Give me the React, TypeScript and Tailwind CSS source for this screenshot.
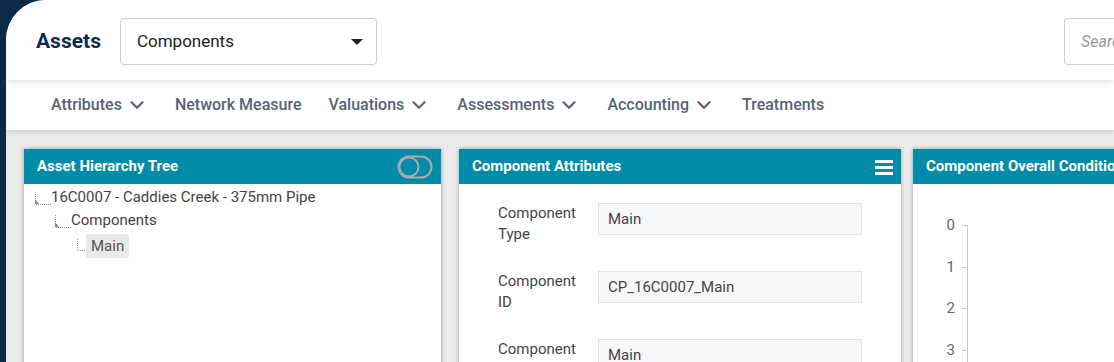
import { ChevronDown } from "lucide-react";

const font = { fontFamily: "Roboto, 'Liberation Sans', sans-serif" };

function TreeConnector() {
    return (
        <svg width="18" height="16" viewBox="0 0 18 16" className="shrink-0">
            <line x1="2.5" y1="0" x2="2.5" y2="12" stroke="#999" strokeWidth="1" strokeDasharray="1 1" />
            <polygon points="2,7 6,12 2,12" fill="#888" />
            <line x1="3" y1="12.5" x2="18" y2="12.5" stroke="#999" strokeWidth="1" strokeDasharray="1 1" />
        </svg>
    );
}

function LeafConnector() {
    return (
        <svg width="10" height="14" viewBox="0 0 10 14" className="shrink-0">
            <line x1="1.5" y1="0" x2="1.5" y2="11" stroke="#999" strokeWidth="1" strokeDasharray="1 1" />
            <line x1="2" y1="11.5" x2="10" y2="11.5" stroke="#999" strokeWidth="1" strokeDasharray="1 1" />
        </svg>
    );
}

function CardHeader({ title, children }: { title: string; children?: React.ReactNode }) {
    return (
        <div className="flex h-[35px] items-center justify-between bg-[#008ba8] pl-[13px] pr-[8px]">
            <h2 className="text-[15px] font-bold text-white whitespace-nowrap">{title}</h2>
            {children}
        </div>
    );
}

function Field({ label, value }: { label: string; value: string }) {
    return (
        <div className="flex items-start">
            <div className="w-[100px] shrink-0 pr-[12px] text-[15px] leading-[21px] text-[#444]">{label}</div>
            <div className="flex h-[32px] w-[264px] items-center border border-[#e2e2e2] bg-[#f8f8f8] px-[9px] text-[15px] text-[#444]">
                {value}
            </div>
        </div>
    );
}

export default function App() {
    const navItems = [
        { label: "Attributes", menu: true },
        { label: "Network Measure", menu: false },
        { label: "Valuations", menu: true },
        { label: "Assessments", menu: true },
        { label: "Accounting", menu: true },
        { label: "Treatments", menu: false },
    ];

    return (
        <div className="h-[362px] w-[1114px] overflow-hidden bg-[#0a2a45] pl-[6px]" style={font}>
            <div className="flex h-full flex-col overflow-hidden rounded-tl-[40px] bg-[#ebebeb]">
                <header className="relative z-20 flex h-[80px] shrink-0 items-start bg-white pl-[30px] pt-[18px] shadow-[0_2px_6px_rgba(0,0,0,0.12)]">
                    <h1 className="flex h-[47px] items-center text-[21px] font-bold text-[#0f2c48]">Assets</h1>
                    <div className="ml-[19px] flex h-[47px] w-[257px] items-center justify-between rounded-[4px] border border-[#cfcfcf] pl-[16px] pr-[13px]">
                        <span className="text-[17px] text-[#222]">Components</span>
                        <svg width="12" height="6" viewBox="0 0 12 6">
                            <polygon points="0,0 12,0 6,6" fill="#222" />
                        </svg>
                    </div>
                    <div className="ml-auto flex h-[47px] w-[50px] items-center overflow-hidden rounded-l-[4px] border border-r-0 border-[#cfcfcf] pl-[16px]">
                        <span className="text-[16px] italic text-[#999]">Search</span>
                    </div>
                </header>

                <nav className="relative z-10 flex h-[50px] shrink-0 items-center gap-[27px] bg-white pl-[45px] shadow-[0_2px_5px_rgba(0,0,0,0.12)]">
                    {navItems.map((item) => (
                        <div key={item.label} className="flex items-center gap-[4px]">
                            <span className="text-[16px] font-medium text-[#5b6270]">{item.label}</span>
                            {item.menu && <ChevronDown size={22} strokeWidth={2.4} className="text-[#5b6270]" />}
                        </div>
                    ))}
                </nav>

                <main className="flex flex-1 items-start pl-[18px] pt-[19px]">
                    <section className="h-[300px] w-[417px] shrink-0 bg-white shadow-[0_0_4px_rgba(0,0,0,0.35)]">
                        <CardHeader title="Asset Hierarchy Tree">
                            <svg width="36" height="24" viewBox="0 0 36 24">
                                <rect x="1.5" y="1.5" width="33" height="21" rx="10.5" fill="none" stroke="#aaa" strokeWidth="2" />
                                <circle cx="12" cy="12" r="9.5" fill="none" stroke="#aaa" strokeWidth="2" />
                            </svg>
                        </CardHeader>
                        <div className="pl-[9px] pt-[2px] text-[15px] text-[#444]">
                            <div className="flex h-[22px] items-end">
                                <TreeConnector />
                                <span className="leading-[21px]">16C0007 - Caddies Creek - 375mm Pipe</span>
                            </div>
                            <div className="flex h-[23px] items-end pl-[20px]">
                                <TreeConnector />
                                <span className="leading-[21px]">Components</span>
                            </div>
                            <div className="flex h-[30px] items-center pl-[43px]">
                                <LeafConnector />
                                <span className="rounded-[2px] bg-[#e9e9e9] px-[5px] leading-[24px] text-[#555]">Main</span>
                            </div>
                        </div>
                    </section>

                    <section className="ml-[18px] h-[300px] w-[442px] shrink-0 bg-white shadow-[0_0_4px_rgba(0,0,0,0.35)]">
                        <CardHeader title="Component Attributes">
                            <svg width="18" height="16" viewBox="0 0 18 16">
                                <rect x="0" y="1" width="18" height="3" fill="#fff" />
                                <rect x="0" y="7" width="18" height="3" fill="#fff" />
                                <rect x="0" y="13" width="18" height="3" fill="#fff" />
                            </svg>
                        </CardHeader>
                        <div className="flex flex-col gap-[26px] pl-[39px] pt-[19px]">
                            <Field label="Component Type" value="Main" />
                            <Field label="Component ID" value="CP_16C0007_Main" />
                            <Field label="Component Name" value="Main" />
                        </div>
                    </section>

                    <section className="ml-[12px] h-[300px] w-[250px] shrink-0 bg-white shadow-[0_0_4px_rgba(0,0,0,0.35)]">
                        <CardHeader title="Component Overall Condition" />
                        <div className="flex pl-[32px] pt-[41px]">
                            <div className="flex flex-col text-[15px] text-[#666]">
                                {["0", "1", "2", "3", "4"].map((v) => (
                                    <div key={v} className="flex h-[41.5px] items-start">
                                        <span className="w-[10px] -translate-y-[9px] text-right leading-[18px]">{v}</span>
                                        <span className="ml-[7px] h-px w-[5px] bg-[#ccc]" />
                                    </div>
                                ))}
                            </div>
                            <div className="h-[200px] w-px bg-[#ccc]" />
                        </div>
                    </section>
                </main>
            </div>
        </div>
    );
}
